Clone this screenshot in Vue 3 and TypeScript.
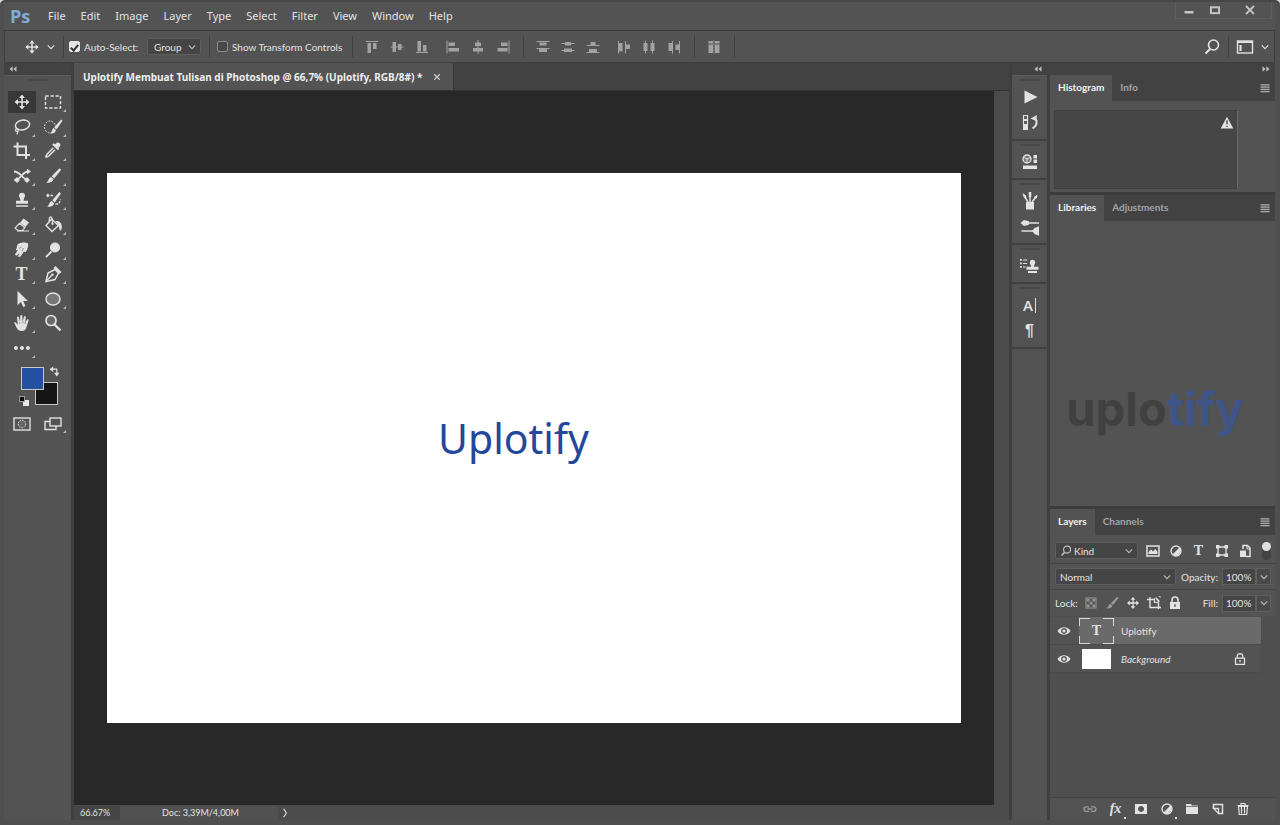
<script setup lang="ts">
import { h, ref } from 'vue'

const solid = 'fill="currentColor" stroke="none"'

const glyphs: Record<string, string> = {
  move: `<path d="M10 4v12M4 10h12" stroke-width="1.6"/><path ${solid} d="M10 2.5l3 3.5H7zM10 17.5l3-3.500H7zM2.500 10L6 7v6zM17.500 10L14 7v6z"/>`,
  marquee: `<rect x="2.500" y="4" width="15" height="12" stroke-width="1.400" stroke-dasharray="3.200 1.800"/>`,
  lasso: `<ellipse cx="10.500" cy="8" rx="7.200" ry="4.800" transform="rotate(-12 10.500 8)" stroke-width="1.500"/><path d="M5 11.500c-2 .5-2 3 0 2.800s1.600-2.400 0-2.800M5.500 14c.6 1.200 0 2.500-.8 3.300" stroke-width="1.200"/>`,
  quick: `<ellipse cx="7" cy="10" rx="5.500" ry="6" stroke-dasharray="1.800 1.300"/><path ${solid} d="M18.200 2.500l1.300 1.200-5.800 8.500-2.500-2zM10.500 11l2.500 2c-.8 3.200-3 3.800-5.700 3.400 1.800-1 1.400-3.900 3.200-5.400z"/>`,
  crop: `<path d="M5.500 1.500V14H18M1.500 5.500H14V18" stroke-width="2"/>`,
  dropper: `<path ${solid} d="M12 3.500c2-2.600 3.600-2.300 4.700-1.200s1.200 2.600-1.200 4.600l.8.900-1.500 1.500-5.600-5.600 1.500-1.500z"/><path d="M10.200 7L4 13.200c-.8 1-.8 2.400-1.500 3.300.900-.7 2.300-.7 3.300-1.500L12 8.800" stroke-width="1.500"/>`,
  mix: `<path d="M2 5.500c7 0 8 8.500 15 8.500M2.500 14c7 0 7-8.500 14-8.500" stroke-width="1.800"/><path ${solid} d="M19 5.500L15 2.700v5.600zM5 11l3 3-3 3-3-3zM15 11l3 3-3 3-3-3z"/>`,
  brush: `<path ${solid} d="M16.500 2.300l1.700 1.500-7 8.700-2.500-2.300zM8 10.900l2.600 2.200c-.6 3-3.900 4.300-7.600 3.500 2.500-.8 2.200-4.500 5-5.700z"/>`,
  stamp: `<path ${solid} d="M7 5.800a3 3 0 0 1 6 0c0 2-1.600 2.500-1.300 5H16v3H4v-3h4.300C8.600 8.300 7 7.800 7 5.800z"/><path d="M4 16h12" stroke-width="1.500"/>`,
  history: `<path ${solid} d="M16.300 2l1.700 1.400-6.200 9-2.500-2.200zM8.700 11l2.500 2.200c-.6 3-3.300 4-7 3.200 2-.8 1.700-4 4.500-5.400z"/><path d="M10 5.500H3.500M3.500 5.500l2.500-2M3.500 5.500l2.500 2M12.500 14c3 .5 4.500-1.500 5-4.500" stroke-width="1.400" stroke-dasharray="2.500 1"/>`,
  eraser: `<path ${solid} d="M11.500 3.500l5.500 4-3.500 4.500L8 7.800z"/><path d="M7.500 8.300l5.300 4.200-2.300 3H6l-3-2.300zM5 16h12" stroke-width="1.200"/>`,
  bucket: `<path d="M8.500 4l7 6.500-6.500 6L3 10.500z" stroke-width="1.400"/><path d="M6.500 7.500C5.500 3 7 1.500 8.300 2s1.200 3 1.200 6.500" stroke-width="1.200"/><path ${solid} d="M12.500 6c3-.5 6.500 1 6.300 6 0 1.500-.5 3.500-1.300 3.500-1.200 0-1.300-3-2-5.500zM9.500 7.500a1.200 1.200 0 1 1-.1 0z"/>`,
  smudge: `<path ${solid} d="M5.500 4.500C8 2.500 13 2 16 3.200c.5 3-.5 6.300-2.200 8.800l-2-.2-3.500 5-2.500 0 1.800-3.800-3.200 2.800-1.500-1.200 3-4.600-2 .3z"/><path d="M7 8.500l2.500-1.500M10 11l1.500-3" stroke="#535353" stroke-width=".6"/>`,
  dodge: `<circle cx="12" cy="7.500" r="5" ${solid}/><path d="M8.500 11.500L3 17" stroke-width="1.800"/>`,
  pen: `<path d="M3 17.500l2-8.500 7-3.500 3.500 3.500L12 15.500z" stroke-width="1.500"/><path d="M3.500 17l5-5.500" stroke-width="1.200"/><circle cx="9.300" cy="10.700" r="1.300" ${solid}/><path ${solid} d="M12.500 2l6 6-2 2-6-6z"/>`,
  arrow: `<path ${solid} d="M5.500 1.800v14.400l3.400-3.200 2.300 5 2.300-1-2.300-4.900h4.700z"/>`,
  ellipse: `<ellipse cx="10" cy="10" rx="7" ry="6" fill="#777" stroke-width="1.500"/>`,
  hand: `<path ${solid} d="M2.200 9.600c.8-.7 1.700-.3 2.400.8l1.200 1.400-.8-7.300c.2-1.200 1.700-1.200 2 0l1 4.700.3-6.400c.2-1.200 1.800-1.200 2 0l.2 6.400 1.400-5.400c.4-1.100 1.800-.9 1.900.3l-.7 6 1.800-3.300c.7-1 2-.4 1.700.7l-2 6.200c-.7 2.800-2 4.300-4.800 4.300-3.800 0-5-2-7.600-8.400z"/><path d="M7.700 9v2M10.900 8.500v2M13.300 9l-.4 2" stroke="#535353" stroke-width=".5"/>`,
  zoom: `<circle cx="8" cy="7.500" r="5" fill="#6a6a6a" stroke-width="1.700"/><path d="M11.500 11.500l6 6" stroke-width="2.400"/>`,
  dots: `<path ${solid} d="M4 8a2 2 0 1 1-.1 0zM10 8a2 2 0 1 1-.1 0zM16 8a2 2 0 1 1-.1 0z"/>`,
  swap: `<path d="M5 7h8v8" stroke-width="2"/><path ${solid} d="M1 7l6-4.500v9zM13 19l-4.500-6h9z"/>`,
  mask: `<rect x="2" y="4" width="16" height="12" stroke-width="1.400"/><circle cx="10" cy="10" r="3.800" fill="#666" stroke-dasharray="1.500 1"/>`,
  screens: `<rect x="7" y="4" width="11" height="8" stroke-width="1.400"/><path d="M7 7.500H2v8h11V12" stroke-width="1.400"/>`,
  chevron: `<path d="M6 8l4 4 4-4" stroke-width="1.400"/>`,
  right: `<path d="M8 4l4 6-4 6" stroke-width="1.600"/>`,
  search: `<circle cx="11.500" cy="8" r="5" stroke-width="1.600"/><path d="M8 12l-4.500 4.500" stroke-width="2.200"/>`,
  workspace: `<rect x="2.500" y="4" width="15" height="12" stroke-width="1.400"/><path d="M2.500 5h15" stroke-width="2"/><path d="M5.500 8v6" stroke-width="2.200"/>`,
  min: `<path d="M5 12.500h10" stroke-width="2.600"/>`,
  max: `<rect x="5.500" y="7" width="9" height="6.500" stroke-width="2.200"/>`,
  close: `<path d="M6 6l8 8M14 6l-8 8" stroke-width="1.800"/>`,
  alT: `<path d="M4 4.500h12"/><path ${solid} d="M5.500 6h3.500v10H5.500zM11 6h3.500v6H11z"/>`,
  alM: `<path d="M3.500 10h13"/><path ${solid} d="M5.500 5H9v10H5.500zM11 7h3.500v6H11z"/>`,
  alB: `<path d="M4 15.500h12"/><path ${solid} d="M5.500 4H9v10.500H5.500zM11 8h3.500v6.500H11z"/>`,
  alL: `<path d="M4 3.500v13"/><path ${solid} d="M5.500 5.500H12V9H5.500zM5.500 11H16v3.500H5.500z"/>`,
  alC: `<path d="M10 3v14"/><path ${solid} d="M7 5.500h6V9H7zM5 11h10v3.500H5z"/>`,
  alR: `<path d="M16 3.500v13"/><path ${solid} d="M8 5.500h6.500V9H8zM4.500 11h10v3.500h-10z"/>`,
  dT: `<path d="M3.500 4.500h13M3.500 11.500h13"/><path ${solid} d="M6.500 5.500h7v3h-7zM6 12h8v3H6z"/>`,
  dM: `<path d="M3.500 6.500h13M3.500 13.500h13"/><path ${solid} d="M7 5h6v3.500H7zM6 11.500h8V15H6z"/>`,
  dB: `<path d="M3.500 8.500h13M3.500 15.500h13"/><path ${solid} d="M7.500 5h5v3.500h-5zM6 12h8v3H6z"/>`,
  dL: `<path d="M4.500 4v12.500M11.500 4v12.500"/><path ${solid} d="M5 6h3.500v8.500H5zM12 7.500h4V12h-4z"/>`,
  dC: `<path d="M6.500 3.500v13M13.500 3.500v13"/><path ${solid} d="M4.500 6h4v8h-4zM11.500 6h4v8h-4z"/>`,
  dR: `<path d="M8.500 4v12.500M15.500 4v12.500"/><path ${solid} d="M4.500 6H8v8H4.500zM11.500 7.500H15V13h-3.500z"/>`,
  auto: `<path ${solid} d="M4.500 4H9v2.500H4.500zM11 4h4.500v2.500H11zM4.500 7.500H9V16H4.500zM11 7.500h4.500V16H11z"/><path d="M10 3.500v13" stroke-dasharray="2 1"/>`,
  play: `<path ${solid} d="M4.500 3.500L17.500 10l-13 6.500z"/>`,
  actions: `<path d="M3.500 2.500h4v4h-4zM3.500 7.500h4v4h-4z" stroke-width="1.200"/><path ${solid} d="M3 12h5v5H3zM10.500 5.500l6.500-3.500-1 6z"/><path d="M14.500 4.500c3.500 3.500 2.500 8.500-2 10.800" stroke-width="2"/>`,
  props: `<circle cx="7" cy="7" r="4" fill="#777" stroke-width="1.400"/><path d="M4 5.500l3 1.500 3-1.500M7 7v4" stroke-width="1"/><path ${solid} d="M13.500 3h3.500v3.500h-3.500zM13.500 7.500h3.500V11h-3.500zM3 13.500h14v3.500H3z"/>`,
  brushes: `<path ${solid} d="M6 11h8v7.500H6z"/><path d="M10 11V4M8 11L4.500 5.500M12 11l3.500-4.500" stroke-width="1.500"/><path ${solid} d="M8.700 1h2.600v5H8.700zM2.500 2l3.500 2.500.5 3L3.500 6zM17.500 3.500l-.5 3.500-3.500 1.500 1-3z"/>`,
  presets: `<path d="M5 6h14M1.500 14h12" stroke-width="1.600"/><path ${solid} d="M0.500 6l3.500-3 5 1.200v3.600l-5 1.200zM12 14l3-3.500c1.500 0 2.500-.5 4-1.500v10c-1.500-1-2.500-1.500-4-1.500z"/>`,
  clone: `<path ${solid} d="M9.800 6.500a2.700 2.700 0 0 1 5.400 0c0 1.800-1.400 2.300-1.200 4.300h4.500v3H6.500v-3H11c.2-2-1.200-2.500-1.200-4.300zM8 15h9v2H8zM0 3h1.800v1.800H0zM0 6.500h1.800v1.800H0zM0 10h1.800v1.800H0z"/><path d="M3 4h4M3 7.500h4M3 11h2.500"/>`,
  warn: `<path ${solid} d="M10 3l7 13H3z"/><path d="M10 7v4.500M10 13v1.500" stroke="#444" stroke-width="1.500"/>`,
  menu: `<path d="M5 6.500h10M5 9h10M5 11.500h10M5 14h10" stroke-width="1.200"/>`,
  image: `<rect x="4" y="5" width="12" height="10" stroke-width="1.500"/><path ${solid} d="M5.500 13V11l2.500-2.500 2 2L12.500 8l2 3v2z"/>`,
  adjust: `<circle cx="10" cy="10" r="5" stroke-width="1.400"/><path ${solid} d="M13.500 6.500a5 5 0 0 1-7 7z"/>`,
  shape: `<path d="M6 6h8v8H6z" stroke-width="1.300"/><path ${solid} d="M4 4h3.500v3.500H4zM12.500 4H16v3.500h-3.500zM4 12.500h3.500V16H4zM12.500 12.500H16V16h-3.500z"/>`,
  smart: `<path d="M8 8V4.500h4.500L15 7v8.500h-4" stroke-width="1.500"/><path d="M12 4.500V8h3"/><path ${solid} d="M5 9.500h6V16H5z"/>`,
  checker: `<rect x="5" y="5" width="10" height="10"/><path ${solid} d="M6 6h2.500v2.500H6zM11.500 6H14v2.500h-2.500zM8.700 8.700h2.600v2.600H8.700zM6 11.500h2.500V14H6zM11.500 11.500H14V14h-2.500z"/>`,
  artboard: `<path d="M3 6.500h8M14.500 9.500V16M6 4v10.500h11" stroke-width="1.400"/><path d="M10.500 5.500v4h4" stroke-width="1.200"/><path ${solid} d="M11 4.500h1.500l3 3V9h-1.500zM14.500 3h2v2z"/>`,
  lock: `<path d="M7 9V7a3 3 0 0 1 6 0v2" stroke-width="1.600"/><path ${solid} fill-rule="evenodd" d="M5 9h10v7H5zM9.300 11.200v2.500h1.400v-2.500z"/>`,
  lockLine: `<path d="M7 9V7a3 3 0 0 1 6 0V9M5 9h10v7H5zM10 11v2.500" stroke-width="1.400"/>`,
  eye: `<path ${solid} fill-rule="evenodd" d="M3.500 10C6.500 5 13.500 5 16.500 10c-3 5-10 5-13 0zM10 7a3 3 0 1 0 .1 0z"/><circle cx="10" cy="10" r="1.600" ${solid}/>`,
  link: `<path d="M9 7.800H6.300a2.300 2.300 0 0 0 0 4.600H9M11 7.800h2.700a2.300 2.300 0 0 1 0 4.600H11M7.500 10h5" stroke-width="1.300"/>`,
  maskAdd: `<path ${solid} fill-rule="evenodd" d="M4 5h12v10H4zM10 7a3 3 0 1 0 .1 0z"/>`,
  folder: `<path ${solid} d="M4 5h5l1 1.500h6V15H4z"/><path d="M4 7.500h12" stroke="#535353" stroke-width=".7"/>`,
  page: `<path d="M5.500 9V5.500h9v9H11" stroke-width="1.500"/><path d="M5.500 9.500h5v5z" stroke-width="1.300"/>`,
  trash: `<path d="M5.500 7.500h9l-.8 8H6.300zM4.500 6.500h11M8 6V4.500h4V6M8.500 8v6.500M11.500 8v6.500" stroke-width="1.200"/>`,
  left2: `<path ${solid} d="M9.500 6v8L5 10zM15 6v8l-4.500-4z"/>`,
  right2: `<path ${solid} d="M5 6v8l4.500-4zM10.500 6v8l4.500-4z"/>`,
}

const Icon = (props: { name: string; size?: number }) =>
  h('svg', {
    viewBox: '0 0 20 20',
    width: props.size ?? 20,
    height: props.size ?? 20,
    fill: 'none',
    stroke: 'currentColor',
    'aria-hidden': 'true',
    innerHTML: glyphs[props.name],
  })
Icon.props = ['name', 'size']

const menus = ['File', 'Edit', 'Image', 'Layer', 'Type', 'Select', 'Filter', 'View', 'Window', 'Help']

const tools = [
  'move', 'marquee', 'lasso', 'quick', 'crop', 'dropper', 'mix', 'brush', 'stamp', 'history', 'eraser',
  'bucket', 'smudge', 'dodge', 'type', 'pen', 'arrow', 'ellipse', 'hand', 'zoom', 'dots',
]
const activeTool = ref('move')

const alignGroups = [['alT', 'alM', 'alB'], ['alL', 'alC', 'alR']]
const spreadGroups = [['dT', 'dM', 'dB'], ['dL', 'dC', 'dR']]

const dock = [['play', 'actions'], ['props'], ['brushes', 'presets'], ['clone'], ['A|', '¶']]
const filters = ['image', 'adjust', 'type', 'shape', 'smart']
const locks = ['checker', 'brush', 'move', 'artboard', 'lock']
const footer = ['link', 'fx', 'maskAdd', 'adjust', 'folder', 'page', 'trash']

const autoSelect = ref(true)
const showTransform = ref(false)
const opacity = ref('100%')
const fillAmount = ref('100%')
</script>

<template>
  <div class="window">
    <header class="menubar">
      <span class="brand">Ps</span>
      <nav class="menus">
        <button v-for="m in menus" :key="m" type="button">{{ m }}</button>
      </nav>
      <div class="winctl">
        <button type="button" aria-label="Minimize"><Icon name="min" :size="18" /></button>
        <button type="button" aria-label="Maximize"><Icon name="max" :size="18" /></button>
        <button type="button" class="wide" aria-label="Close"><Icon name="close" :size="20" /></button>
      </div>
    </header>

    <section class="options">
      <button type="button" class="preset" aria-label="Move tool presets">
        <Icon name="move" :size="18" /><Icon name="chevron" :size="16" />
      </button>
      <i class="sep"></i>
      <label class="check auto"><input v-model="autoSelect" type="checkbox" />Auto-Select:</label>
      <span class="pick group">
        <select aria-label="Auto-select target"><option>Group</option></select>
        <Icon name="chevron" :size="16" />
      </span>
      <i class="sep"></i>
      <label class="check show"><input v-model="showTransform" type="checkbox" />Show Transform Controls</label>
      <i class="sep"></i>
      <div v-for="(g, i) in alignGroups" :key="'a' + i" class="trio">
        <button v-for="n in g" :key="n" type="button" :aria-label="n"><Icon :name="n" /></button>
      </div>
      <i class="sep"></i>
      <div v-for="(g, i) in spreadGroups" :key="'s' + i" class="trio">
        <button v-for="n in g" :key="n" type="button" :aria-label="n"><Icon :name="n" /></button>
      </div>
      <i class="sep"></i>
      <div class="trio">
        <button type="button" aria-label="Auto-align layers"><Icon name="auto" /></button>
      </div>
      <i class="sep"></i>
      <div class="right">
        <button type="button" aria-label="Search"><Icon name="search" /></button>
        <i class="sep"></i>
        <button type="button" class="ws" aria-label="Workspace">
          <Icon name="workspace" /><Icon name="chevron" :size="16" />
        </button>
      </div>
    </section>

    <main class="work">
      <aside class="toolcol">
        <div class="strip start"><Icon name="left2" :size="14" /></div>
        <div class="toolbox">
          <i class="grip"></i>
          <div class="tools">
            <button
              v-for="t in tools"
              :key="t"
              type="button"
              :aria-label="t"
              :class="{ on: t === activeTool, more: t !== 'move' && t !== 'zoom' }"
              @click="activeTool = t"
            >
              <span v-if="t === 'type'" class="tee">T</span>
              <Icon v-else :name="t" />
            </button>
          </div>
          <div class="swatches">
            <button type="button" class="back" aria-label="Background color"></button>
            <button type="button" class="fore" aria-label="Foreground color"></button>
            <button type="button" class="swap" aria-label="Swap colors"><Icon name="swap" :size="12" /></button>
            <button type="button" class="reset" aria-label="Default colors"><i></i><b></b></button>
          </div>
          <div class="modes">
            <button type="button" aria-label="Quick mask"><Icon name="mask" /></button>
            <button type="button" class="more" aria-label="Screen mode"><Icon name="screens" /></button>
          </div>
        </div>
      </aside>

      <section class="doc">
        <div class="doctabs">
          <div class="doctab">
            <span>Uplotify Membuat Tulisan di Photoshop @ 66,7% (Uplotify, RGB/8#) *</span>
            <button type="button" aria-label="Close document"><Icon name="close" :size="14" /></button>
          </div>
        </div>
        <div class="stage">
          <div class="pasteboard">
            <div class="artboard"><p>Uplotify</p></div>
          </div>
          <div class="scroll"></div>
        </div>
        <footer class="status">
          <span class="pct">66.67%</span>
          <span class="size">Doc: 3,39M/4,00M</span>
          <button type="button" aria-label="Status options"><Icon name="right" :size="14" /></button>
        </footer>
      </section>

      <aside class="dock">
        <div class="strip"><Icon name="left2" :size="14" /></div>
        <div class="dockbody">
          <div v-for="(g, i) in dock" :key="i" class="dockgroup">
            <i class="grip"></i>
            <button v-for="n in g" :key="n" type="button" :aria-label="n">
              <span v-if="n === 'A|'" class="char">A<i></i></span>
              <span v-else-if="n === '¶'" class="para">¶</span>
              <Icon v-else :name="n" />
            </button>
          </div>
        </div>
      </aside>

      <aside class="panels">
        <div class="strip"><Icon name="right2" :size="14" /></div>
        <section class="panel">
          <div class="tabs">
            <button type="button" class="on">Histogram</button>
            <button type="button">Info</button>
            <Icon name="menu" :size="18" />
          </div>
          <div class="histo"><div class="graph"><Icon name="warn" :size="18" /></div></div>
        </section>
        <section class="panel grow">
          <div class="tabs">
            <button type="button" class="on">Libraries</button>
            <button type="button">Adjustments</button>
            <Icon name="menu" :size="18" />
          </div>
          <div class="library"><span class="logo">uplo<b>tify</b></span></div>
        </section>
        <section class="panel grow">
          <div class="tabs">
            <button type="button" class="on">Layers</button>
            <button type="button">Channels</button>
            <Icon name="menu" :size="18" />
          </div>
          <div class="row filter">
            <span class="pick kind">
              <Icon name="search" :size="14" />
              <select aria-label="Filter kind"><option>Kind</option></select>
              <Icon name="chevron" :size="16" />
            </span>
            <div class="icons">
              <button v-for="f in filters" :key="f" type="button" :aria-label="f">
                <span v-if="f === 'type'" class="tee small">T</span>
                <Icon v-else :name="f" />
              </button>
            </div>
            <button type="button" class="toggle" aria-label="Toggle filtering"></button>
          </div>
          <div class="row blend">
            <span class="pick mode">
              <select aria-label="Blend mode"><option>Normal</option></select>
              <Icon name="chevron" :size="16" />
            </span>
            <label class="num">Opacity:<input v-model="opacity" type="text" /></label>
            <button type="button" class="drop" aria-label="Opacity slider"><Icon name="chevron" :size="16" /></button>
          </div>
          <div class="row locks">
            <span class="cap">Lock:</span>
            <div class="icons">
              <button v-for="(l, i) in locks" :key="l" type="button" :class="{ dim: i < 2 }" :aria-label="l">
                <Icon :name="l" :size="i === 1 || i === 2 ? 16 : 20" />
              </button>
            </div>
            <label class="num">Fill:<input v-model="fillAmount" type="text" /></label>
            <button type="button" class="drop" aria-label="Fill slider"><Icon name="chevron" :size="16" /></button>
          </div>
          <ul class="layers">
            <li class="on">
              <button type="button" class="eye" aria-label="Hide Uplotify"><Icon name="eye" /></button>
              <div class="layer">
                <span class="thumb"><span class="tee small">T</span><i></i><i></i><i></i><i></i></span>
                <span>Uplotify</span>
              </div>
            </li>
            <li>
              <button type="button" class="eye" aria-label="Hide Background"><Icon name="eye" /></button>
              <div class="layer">
                <span class="thumb"><span class="paper"></span></span>
                <em>Background</em>
                <Icon class="locked" name="lockLine" :size="18" />
              </div>
            </li>
          </ul>
          <div class="foot">
            <button v-for="(f, i) in footer" :key="f" type="button" :class="{ dim: i === 0, dot: f === 'fx' || f === 'adjust' }" :aria-label="f">
              <span v-if="f === 'fx'" class="fx">fx</span>
              <Icon v-else :name="f" />
            </button>
          </div>
        </section>
      </aside>
    </main>
  </div>
</template>

<style>
body {
  margin: 0;
  background: #d8d8d8;
}
</style>

<style scoped>
* {
  box-sizing: border-box;
}
.window {
  display: flex;
  flex-direction: column;
  height: 100vh;
  padding: 0 5px 5px 4px;
  overflow: hidden;
  border-top: 2px solid #474747;
  border-radius: 5px 5px 0 0;
  background: #4f4f4f;
  color: #e2e2e2;
  font: 10px/14px Lato, "Noto Sans", sans-serif;
}
button,
select,
input {
  margin: 0;
  padding: 0;
  border: 0;
  background: none;
  color: inherit;
  font: inherit;
}
button {
  display: flex;
  align-items: center;
  justify-content: center;
}
svg {
  display: block;
  flex: none;
}

.menubar {
  display: flex;
  align-items: center;
  height: 28px;
  background: #535353;
}
.brand {
  width: 37px;
  padding-left: 6px;
  color: #7fabdc;
  font: 700 18px/26px "Open Sans", sans-serif;
}
.menus {
  display: flex;
  flex: 1;
  font-family: "Noto Sans", "Open Sans", sans-serif;
  font-size: 11px;
}
.menus button {
  padding: 0 8px 0 7px;
}
.winctl {
  display: flex;
  align-self: flex-start;
  margin-right: 3px;
  border: 1px solid #5e5e5e;
  border-top: 0;
  color: #c4c4c4;
}
.winctl button {
  width: 26px;
  height: 16px;
}
.winctl .wide {
  width: 43px;
}

.options {
  display: flex;
  align-items: center;
  height: 33px;
  border: 1px solid #3f3f3f;
  border-top-color: #3b3b3b;
  background: #535353;
}
.sep {
  flex: none;
  width: 1px;
  height: 21px;
  background: #404040;
}
.preset {
  width: 58px;
  gap: 2px;
  padding-left: 14px;
}
.check {
  display: flex;
  align-items: center;
  gap: 4px;
  white-space: nowrap;
}
.auto {
  width: 83px;
  padding-left: 5px;
}
.show {
  width: 142px;
  padding-left: 7px;
}
.check input {
  appearance: none;
  width: 11px;
  height: 11px;
  border: 1px solid #8a8a8a;
  border-radius: 2px;
  background: #484848;
}
.check input:checked {
  display: grid;
  place-items: center;
  border-color: #e6e6e6;
  background: #e6e6e6;
}
.check input:checked::before {
  content: "";
  width: 3px;
  height: 6px;
  border: solid #333;
  border-width: 0 2px 2px 0;
  transform: rotate(40deg);
}
.pick {
  display: flex;
  align-items: center;
  height: 17px;
  border: 1px solid #5e5e5e;
  border-radius: 2px;
  background: #454545;
}
.pick svg {
  color: #bdbdbd;
}
.pick select {
  appearance: none;
  flex: 1;
  min-width: 0;
  padding-left: 6px;
}
.group {
  width: 54px;
  margin-right: 8px;
}
.trio {
  display: flex;
  padding-left: 6px;
  color: #a2a2a2;
}
.trio + .trio {
  padding: 0 8px 0 6px;
}
.trio button {
  width: 25px;
}
.trio:has(> :only-child) {
  padding-right: 8px;
}
.right {
  display: flex;
  align-items: center;
  gap: 6px;
  margin-left: auto;
  margin-right: 1px;
}
.ws {
  gap: 2px;
}

.work {
  display: flex;
  flex: 1;
  min-height: 0;
  background: #3f3f3f;
}
.strip {
  display: flex;
  flex: none;
  align-items: center;
  justify-content: flex-end;
  height: 12px;
  padding-right: 5px;
  background: #424242;
  color: #bcbcbc;
}
.start {
  justify-content: flex-start;
  padding-left: 2px;
}
.toolcol {
  display: flex;
  flex-direction: column;
  width: 67px;
  margin-right: 3px;
}
.toolbox {
  flex: 1;
  padding-left: 2px;
  border-top: 1px solid #5c5c5c;
  background: #535353;
}
.grip {
  display: block;
  width: 20px;
  height: 2px;
  margin: 3px auto 0;
  background: #484848;
}
.tools {
  display: grid;
  grid-template-columns: 31px 31px;
  grid-template-rows: repeat(11, 1fr);
  place-items: center;
  height: 270px;
  margin-top: 9px;
}
.tools button {
  position: relative;
  width: 28px;
  height: 22px;
}
.tools .on {
  background: #383838;
}
.more::after {
  content: "";
  position: absolute;
  right: 1px;
  bottom: 1px;
  border-bottom: 3px solid #b8b8b8;
  border-left: 3px solid transparent;
}
.tee {
  font: 700 18px/20px "Liberation Serif", serif;
}
.small {
  font-size: 14px;
}
.swatches {
  position: relative;
  width: 38px;
  height: 40px;
  margin: 5px 0 0 15px;
}
.swatches button {
  position: absolute;
}
.fore,
.back {
  width: 23px;
  height: 23px;
  border: 1px solid #c8c8c8;
}
.fore {
  top: 2px;
  left: 0;
  background: #2450a0;
}
.back {
  top: 17px;
  left: 14px;
  background: #151515;
}
.swap {
  top: 0;
  right: -2px;
}
.reset {
  left: -2px;
  bottom: -1px;
  width: 10px;
  height: 10px;
}
.reset i,
.reset b {
  position: absolute;
  width: 6px;
  height: 6px;
}
.reset i {
  right: 0;
  bottom: 0;
  background: #e8e8e8;
}
.reset b {
  top: 0;
  left: 0;
  border: 1px solid #999;
  background: #111;
}
.modes {
  display: grid;
  grid-template-columns: 31px 31px;
  place-items: center;
  margin-top: 9px;
}
.modes button {
  position: relative;
  width: 28px;
}

.doc {
  display: flex;
  flex: 1;
  flex-direction: column;
  min-width: 0;
}
.doctabs {
  display: flex;
  height: 28px;
  border-bottom: 1px solid #333;
  background: #424242;
}
.doctab {
  display: flex;
  align-items: center;
  gap: 8px;
  padding: 0 9px;
  border-right: 1px solid #383838;
  background: #535353;
  color: #eee;
  font-family: "Noto Sans", "Open Sans", sans-serif;
  font-weight: 700;
}
.doctab button {
  color: #c8c8c8;
}
.stage {
  display: flex;
  flex: 1;
  min-height: 0;
}
.pasteboard {
  display: grid;
  flex: 1;
  place-items: center;
  background: #282828;
}
.artboard {
  display: grid;
  place-items: center;
  width: 92.9%;
  aspect-ratio: 854 / 550;
  background: #fff;
}
.artboard p {
  margin: 0 41px 20px 0;
  color: #23479a;
  font: 41px/60px "Noto Sans", "Open Sans", sans-serif;
}
.scroll {
  width: 15px;
  background: #4b4b4b;
}
.status {
  display: flex;
  align-items: center;
  height: 15px;
  background: #4b4b4b;
  font-size: 9px;
}
.pct {
  width: 46px;
  padding-left: 6px;
  background: #454545;
}
.size {
  width: 158px;
  padding-left: 42px;
  background: #505050;
}

.dock {
  display: flex;
  flex-direction: column;
  width: 38px;
  margin-left: 3px;
}
.dockbody {
  flex: 1;
  margin-right: 3px;
  border-top: 1px solid #5c5c5c;
  background: #535353;
}
.dockgroup {
  padding-bottom: 3px;
  border-bottom: 2px solid #404040;
}
.dockgroup .grip {
  margin-bottom: 3px;
}
.dockgroup button {
  width: 100%;
  height: 26px;
}
.char {
  display: flex;
  align-items: center;
  gap: 2px;
  font: 600 15px/18px "Open Sans", sans-serif;
}
.char i {
  width: 1px;
  height: 15px;
  background: #dedede;
}
.para {
  font: 700 16px/18px "Liberation Sans", sans-serif;
}

.panels {
  display: flex;
  flex-direction: column;
  width: 225px;
}
.panels > .strip {
  padding-right: 2px;
}
.panel {
  display: flex;
  flex-direction: column;
  background: #535353;
}
.panel + .panel {
  border-top: 3px solid #3c3c3c;
}
.grow {
  flex: 1 1 0;
  min-height: 0;
}
.tabs {
  display: flex;
  flex: none;
  align-items: center;
  height: 26px;
  background: #424242;
}
.tabs button {
  height: 100%;
  padding: 0 8px 2px;
  color: #a4a4a4;
  font-weight: 700;
}
.tabs .on {
  background: #535353;
  color: #f0f0f0;
}
.tabs svg {
  margin-left: auto;
  margin-right: 1px;
  color: #b0b0b0;
}
.histo {
  padding: 9px 37px 3px 4px;
}
.graph {
  display: flex;
  justify-content: flex-end;
  height: 79px;
  padding: 3px 1px;
  border: 1px solid #3f3f3f;
  border-right-color: #6a6a6a;
  background: #464646;
}
.library {
  display: flex;
  flex: 1;
  align-items: flex-end;
  justify-content: center;
  padding: 0 15px 67px 0;
}
.logo {
  color: #404040;
  font: 700 47px/60px Inter, "Open Sans", sans-serif;
}
.logo b {
  color: #3f5588;
  font-weight: inherit;
}
.row {
  display: flex;
  flex: none;
  align-items: center;
  height: 26px;
  padding: 0 4px 0 5px;
}
.filter {
  height: 29px;
  padding-top: 3px;
  border-bottom: 1px solid #434343;
}
.blend {
  border-bottom: 1px solid #464646;
}
.kind {
  width: 83px;
  padding-left: 3px;
}
.kind select {
  padding-left: 1px;
}
.mode select {
  padding-left: 4px;
}
.filter .icons {
  margin-left: 3px;
}
.icons {
  display: flex;
}
.icons button {
  width: 23px;
  height: 20px;
}
.toggle {
  align-items: flex-start;
  width: 9px;
  height: 18px;
  margin-left: auto;
  border-radius: 4px;
  background: #444;
}
.toggle::before {
  content: "";
  width: 9px;
  height: 9px;
  border-radius: 50%;
  background: #e2e2e2;
}
.mode {
  width: 121px;
}
.num {
  display: flex;
  align-items: center;
  gap: 4px;
  margin-left: auto;
}
.num input {
  width: 34px;
  height: 17px;
  padding-left: 3px;
  border: 1px solid #5e5e5e;
  background: #454545;
}
.drop {
  width: 15px;
  height: 17px;
  border: 1px solid #5e5e5e;
  background: #4a4a4a;
  color: #bdbdbd;
}
.cap {
  width: 25px;
}
.locks .icons button {
  width: 21px;
}
.dim {
  color: #999;
}
.layers {
  flex: 1;
  margin: 0;
  padding: 1px 14px 0 0;
  background: #4f4f4f;
  list-style: none;
}
.layers li {
  display: flex;
  height: 28px;
  border-bottom: 1px solid #4b4b4b;
  background: #535353;
}
.eye {
  width: 28px;
  margin-right: 1px;
}
.layer {
  display: flex;
  flex: 1;
  align-items: center;
  gap: 7px;
}
.layers .on .layer {
  background: #6a6a6a;
}
.thumb {
  position: relative;
  display: grid;
  place-items: center;
  width: 35px;
  height: 26px;
}
.thumb i {
  position: absolute;
  width: 11px;
  height: 8px;
  border: solid #d8d8d8;
  border-width: 0;
}
.thumb i:nth-of-type(1) {
  top: 0;
  left: 0;
  border-width: 1px 0 0 1px;
}
.thumb i:nth-of-type(2) {
  top: 0;
  right: 0;
  border-width: 1px 1px 0 0;
}
.thumb i:nth-of-type(3) {
  bottom: 0;
  left: 0;
  border-width: 0 0 1px 1px;
}
.thumb i:nth-of-type(4) {
  right: 0;
  bottom: 0;
  border-width: 0 1px 1px 0;
}
.paper {
  width: 29px;
  height: 20px;
  background: #fff;
}
.locked {
  margin-left: auto;
  margin-right: 12px;
}
.foot {
  display: flex;
  flex: none;
  align-items: center;
  justify-content: space-between;
  height: 23px;
  padding: 0 22px 0 30px;
  border-top: 1px solid #434343;
}
.foot button {
  position: relative;
  width: 20px;
  height: 20px;
}
.dot::after {
  content: "";
  position: absolute;
  right: 0;
  bottom: 0;
  width: 2px;
  height: 2px;
  background: #ddd;
}
.fx {
  font: italic 700 14px/16px "Liberation Serif", serif;
}
</style>
